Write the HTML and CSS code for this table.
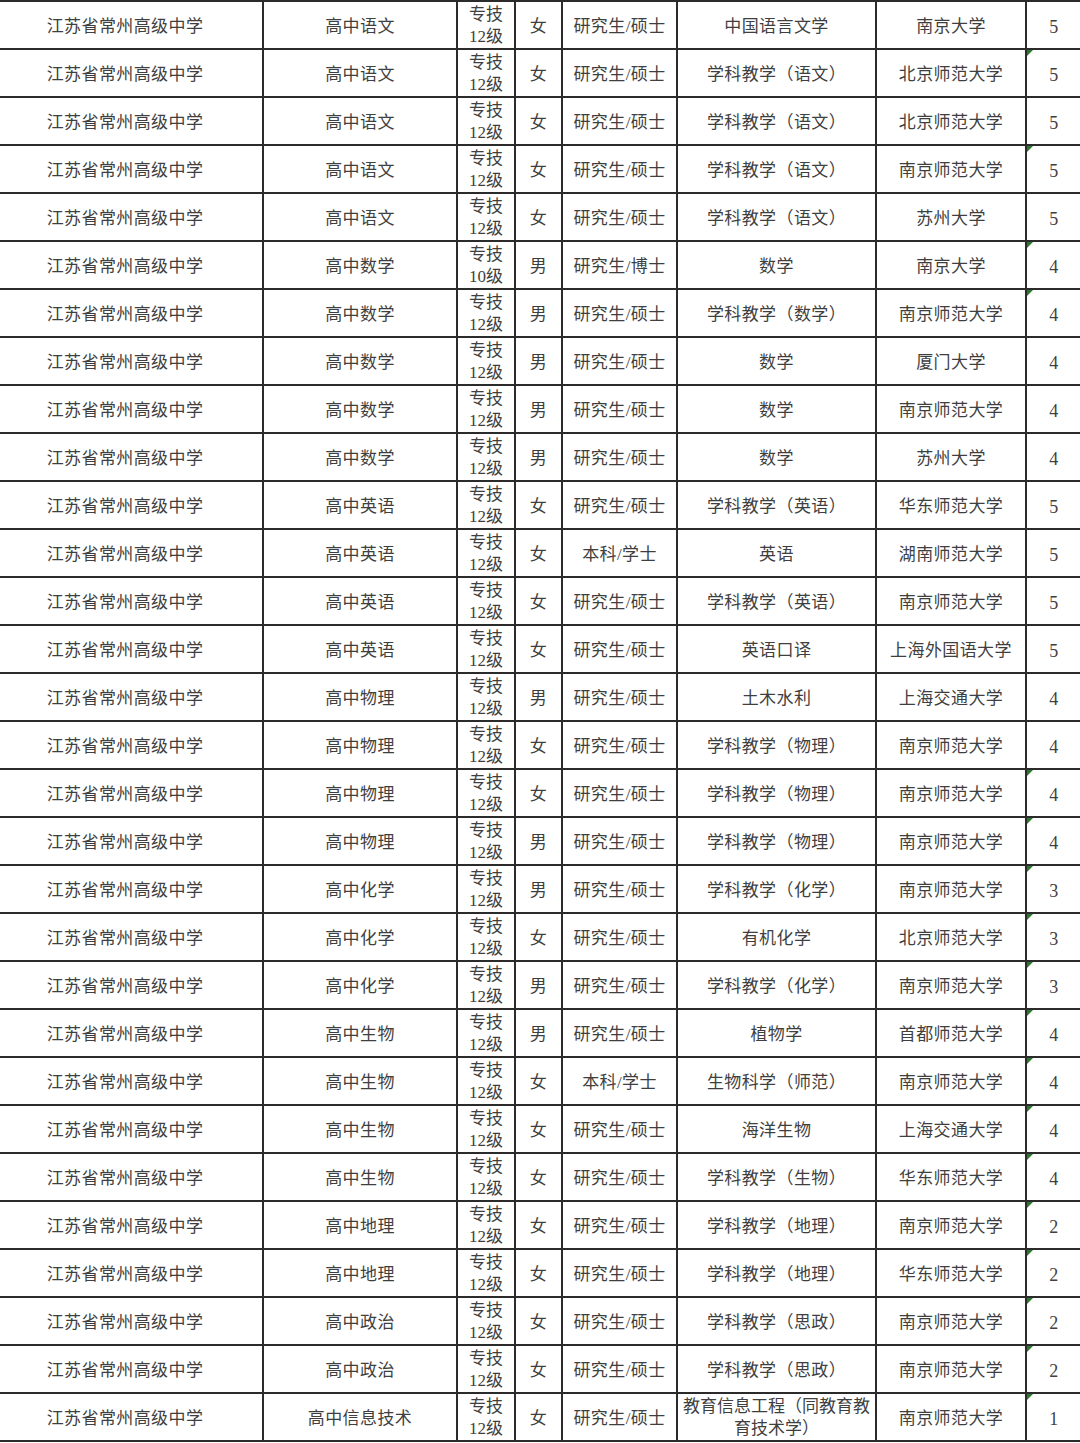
FILE: index.html
```html
<!DOCTYPE html>
<html lang="zh">
<head>
<meta charset="utf-8">
<link rel="stylesheet" href="styles.css">
</head>
<body>
<div class="frame">
<table class="sheet">
<colgroup>
<col class="c1"><col class="c2"><col class="c3"><col class="c4"><col class="c5"><col class="c6"><col class="c7"><col class="c8">
</colgroup>
<tbody>
<tr><td>江苏省常州高级中学</td><td>高中语文</td><td class="lv">专技<br>12级</td><td>女</td><td>研究生/硕士</td><td>中国语言文学</td><td>南京大学</td><td class="n">5</td></tr>
<tr><td>江苏省常州高级中学</td><td>高中语文</td><td class="lv">专技<br>12级</td><td>女</td><td>研究生/硕士</td><td>学科教学（语文）</td><td>北京师范大学</td><td class="n flag">5</td></tr>
<tr><td>江苏省常州高级中学</td><td>高中语文</td><td class="lv">专技<br>12级</td><td>女</td><td>研究生/硕士</td><td>学科教学（语文）</td><td>北京师范大学</td><td class="n">5</td></tr>
<tr><td>江苏省常州高级中学</td><td>高中语文</td><td class="lv">专技<br>12级</td><td>女</td><td>研究生/硕士</td><td>学科教学（语文）</td><td>南京师范大学</td><td class="n flag">5</td></tr>
<tr><td>江苏省常州高级中学</td><td>高中语文</td><td class="lv">专技<br>12级</td><td>女</td><td>研究生/硕士</td><td>学科教学（语文）</td><td>苏州大学</td><td class="n">5</td></tr>
<tr><td>江苏省常州高级中学</td><td>高中数学</td><td class="lv">专技<br>10级</td><td>男</td><td>研究生/博士</td><td>数学</td><td>南京大学</td><td class="n flag">4</td></tr>
<tr><td>江苏省常州高级中学</td><td>高中数学</td><td class="lv">专技<br>12级</td><td>男</td><td>研究生/硕士</td><td>学科教学（数学）</td><td>南京师范大学</td><td class="n flag">4</td></tr>
<tr><td>江苏省常州高级中学</td><td>高中数学</td><td class="lv">专技<br>12级</td><td>男</td><td>研究生/硕士</td><td>数学</td><td>厦门大学</td><td class="n">4</td></tr>
<tr><td>江苏省常州高级中学</td><td>高中数学</td><td class="lv">专技<br>12级</td><td>男</td><td>研究生/硕士</td><td>数学</td><td>南京师范大学</td><td class="n">4</td></tr>
<tr><td>江苏省常州高级中学</td><td>高中数学</td><td class="lv">专技<br>12级</td><td>男</td><td>研究生/硕士</td><td>数学</td><td>苏州大学</td><td class="n">4</td></tr>
<tr><td>江苏省常州高级中学</td><td>高中英语</td><td class="lv">专技<br>12级</td><td>女</td><td>研究生/硕士</td><td>学科教学（英语）</td><td>华东师范大学</td><td class="n">5</td></tr>
<tr><td>江苏省常州高级中学</td><td>高中英语</td><td class="lv">专技<br>12级</td><td>女</td><td>本科/学士</td><td>英语</td><td>湖南师范大学</td><td class="n">5</td></tr>
<tr><td>江苏省常州高级中学</td><td>高中英语</td><td class="lv">专技<br>12级</td><td>女</td><td>研究生/硕士</td><td>学科教学（英语）</td><td>南京师范大学</td><td class="n">5</td></tr>
<tr><td>江苏省常州高级中学</td><td>高中英语</td><td class="lv">专技<br>12级</td><td>女</td><td>研究生/硕士</td><td>英语口译</td><td>上海外国语大学</td><td class="n">5</td></tr>
<tr><td>江苏省常州高级中学</td><td>高中物理</td><td class="lv">专技<br>12级</td><td>男</td><td>研究生/硕士</td><td>土木水利</td><td>上海交通大学</td><td class="n">4</td></tr>
<tr><td>江苏省常州高级中学</td><td>高中物理</td><td class="lv">专技<br>12级</td><td>女</td><td>研究生/硕士</td><td>学科教学（物理）</td><td>南京师范大学</td><td class="n">4</td></tr>
<tr><td>江苏省常州高级中学</td><td>高中物理</td><td class="lv">专技<br>12级</td><td>女</td><td>研究生/硕士</td><td>学科教学（物理）</td><td>南京师范大学</td><td class="n flag">4</td></tr>
<tr><td>江苏省常州高级中学</td><td>高中物理</td><td class="lv">专技<br>12级</td><td>男</td><td>研究生/硕士</td><td>学科教学（物理）</td><td>南京师范大学</td><td class="n flag">4</td></tr>
<tr><td>江苏省常州高级中学</td><td>高中化学</td><td class="lv">专技<br>12级</td><td>男</td><td>研究生/硕士</td><td>学科教学（化学）</td><td>南京师范大学</td><td class="n flag">3</td></tr>
<tr><td>江苏省常州高级中学</td><td>高中化学</td><td class="lv">专技<br>12级</td><td>女</td><td>研究生/硕士</td><td>有机化学</td><td>北京师范大学</td><td class="n flag">3</td></tr>
<tr><td>江苏省常州高级中学</td><td>高中化学</td><td class="lv">专技<br>12级</td><td>男</td><td>研究生/硕士</td><td>学科教学（化学）</td><td>南京师范大学</td><td class="n flag">3</td></tr>
<tr><td>江苏省常州高级中学</td><td>高中生物</td><td class="lv">专技<br>12级</td><td>男</td><td>研究生/硕士</td><td>植物学</td><td>首都师范大学</td><td class="n flag">4</td></tr>
<tr><td>江苏省常州高级中学</td><td>高中生物</td><td class="lv">专技<br>12级</td><td>女</td><td>本科/学士</td><td>生物科学（师范）</td><td>南京师范大学</td><td class="n flag">4</td></tr>
<tr><td>江苏省常州高级中学</td><td>高中生物</td><td class="lv">专技<br>12级</td><td>女</td><td>研究生/硕士</td><td>海洋生物</td><td>上海交通大学</td><td class="n flag">4</td></tr>
<tr><td>江苏省常州高级中学</td><td>高中生物</td><td class="lv">专技<br>12级</td><td>女</td><td>研究生/硕士</td><td>学科教学（生物）</td><td>华东师范大学</td><td class="n flag">4</td></tr>
<tr><td>江苏省常州高级中学</td><td>高中地理</td><td class="lv">专技<br>12级</td><td>女</td><td>研究生/硕士</td><td>学科教学（地理）</td><td>南京师范大学</td><td class="n flag">2</td></tr>
<tr><td>江苏省常州高级中学</td><td>高中地理</td><td class="lv">专技<br>12级</td><td>女</td><td>研究生/硕士</td><td>学科教学（地理）</td><td>华东师范大学</td><td class="n flag">2</td></tr>
<tr><td>江苏省常州高级中学</td><td>高中政治</td><td class="lv">专技<br>12级</td><td>女</td><td>研究生/硕士</td><td>学科教学（思政）</td><td>南京师范大学</td><td class="n flag">2</td></tr>
<tr><td>江苏省常州高级中学</td><td>高中政治</td><td class="lv">专技<br>12级</td><td>女</td><td>研究生/硕士</td><td>学科教学（思政）</td><td>南京师范大学</td><td class="n flag">2</td></tr>
<tr><td>江苏省常州高级中学</td><td>高中信息技术</td><td class="lv">专技<br>12级</td><td>女</td><td>研究生/硕士</td><td class="lv">教育信息工程（同教育教<br>育技术学）</td><td>南京师范大学</td><td class="n flag">1</td></tr>
</tbody>
</table>
</div>
</body>
</html>
```

FILE: styles.css
```css
html, body {
  margin: 0;
  padding: 0;
  background: #ffffff;
}

body {
  width: 1080px;
  height: 1443px;
  overflow: hidden;
}

.frame {
  margin-left: -14px;
  width: 1110px;
}

.sheet {
  border-collapse: collapse;
  table-layout: fixed;
  width: 1095px;
  font-family: "Liberation Serif", "Noto Sans CJK SC", serif;
  font-size: 17px;
  color: #3f3f3f;
  letter-spacing: 0.4px;
}

.c1 { width: 276px; }
.c2 { width: 194px; }
.c3 { width: 58px; }
.c4 { width: 47px; }
.c5 { width: 115px; }
.c6 { width: 199px; }
.c7 { width: 150px; }
.c8 { width: 56px; }

.sheet tr {
  height: 48px;
}

.sheet td {
  border: 2px solid #2b2b2b;
  padding: 3px 1px 0;
  text-align: center;
  vertical-align: middle;
  white-space: nowrap;
  line-height: 22px;
  position: relative;
}

.sheet td.lv {
  padding-top: 1px;
  letter-spacing: 0;
}

.sheet td.n {
  font-size: 18px;
}

.sheet td.flag::before {
  content: "";
  position: absolute;
  left: 0;
  top: 0;
  width: 0;
  height: 0;
  border-top: 6px solid #2d7a2d;
  border-right: 6px solid transparent;
}
```
